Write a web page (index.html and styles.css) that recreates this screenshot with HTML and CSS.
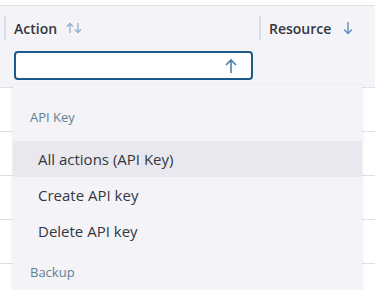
FILE: index.html
```html
<!DOCTYPE html>
<html lang="en">
<head>
    <meta charset="UTF-8">
    <meta name="viewport" content="width=device-width, initial-scale=1.0">
    <title>Audit log</title>
    <link rel="stylesheet" href="styles.css">
</head>
<body>
    <div class="table">
        <!-- header -->
        <div class="thead">
            <div class="th th-action">
                <div class="th-label">
                    Action
                    <svg class="sort-icon" width="16" height="12" viewBox="0 0 16 12">
                        <path d="M4 11V1.5M1 4.5L4 1.5L7 4.5" fill="none" stroke="#8fb0cc" stroke-width="1.3"/>
                        <path d="M12 1V10.5M9 7.5L12 10.5L15 7.5" fill="none" stroke="#8fb0cc" stroke-width="1.3"/>
                    </svg>
                </div>
                <div class="filter-input">
                    <svg width="12" height="16" viewBox="0 0 12 16">
                        <path d="M6 15V2M1 7L6 2L11 7" fill="none" stroke="#4f7fa8" stroke-width="1.6"/>
                    </svg>
                </div>
            </div>
            <div class="th th-resource">
                <div class="th-label">
                    Resource
                    <svg class="sort-icon" width="10" height="14" viewBox="0 0 10 14">
                        <path d="M5 1V12.5M1 8.5L5 12.5L9 8.5" fill="none" stroke="#5b8fc0" stroke-width="1.4"/>
                    </svg>
                </div>
            </div>
        </div>
        <!-- rows -->
        <div class="tr"></div>
        <div class="tr"></div>
        <div class="tr"></div>
        <div class="tr"></div>
    </div>

    <!-- dropdown -->
    <div class="dropdown">
        <div class="group-label">API Key</div>
        <div class="option active">All actions (API Key)</div>
        <div class="option">Create API key</div>
        <div class="option">Delete API key</div>
        <div class="group-label">Backup</div>
    </div>
</body>
</html>
```
FILE: styles.css
```css
/*global*/
* {
    margin: 0;
    padding: 0;
    box-sizing: border-box;
}

body {
    font-family: "Open Sans", "Noto Sans", sans-serif;
    color: #343741;
    background-color: #fff;
    padding-top: 5px;
    overflow: hidden;
    height: 290px;
    position: relative;
}

/*header*/
.thead {
    display: flex;
    height: 83px;
    background-color: #f3f3f8;
    border-top: 1px solid #dfdfe8;
    border-bottom: 1px solid #dfdfe8;
}

.th {
    padding-top: 10px;
}

.th-action {
    width: 259px;
    padding-left: 4px;
}

.th-resource {
    flex: 1;
}

.th-label {
    display: flex;
    align-items: center;
    height: 24px;
    border-left: 2px solid #dcdce6;
    padding-left: 8px;
    font-size: 14px;
    font-weight: 600;
}

.sort-icon {
    margin-left: 9px;
}

.th-resource .sort-icon {
    margin-left: 12px;
}

.filter-input {
    display: flex;
    align-items: center;
    justify-content: flex-end;
    margin: 11px 0 0 10px;
    width: 239px;
    height: 29px;
    padding-right: 14px;
    background-color: #fff;
    border: 2px solid #1a5a8a;
    border-radius: 4px;
}

/*rows*/
.tr {
    height: 44px;
    border-bottom: 1px solid #dfdfe8;
}

/*dropdown*/
.dropdown {
    position: absolute;
    left: 13px;
    top: 85px;
    width: 349px;
    height: 205px;
    padding-top: 9px;
    background-color: #f3f3f8;
    box-shadow: 0 1px 3px rgba(60, 60, 90, 0.15);
}

.group-label {
    padding: 14px 17px 15px;
    line-height: 18px;
    font-size: 13px;
    color: #627f96;
}

.option {
    height: 36px;
    line-height: 36px;
    padding-left: 25px;
    font-size: 15px;
    color: #343741;
}

.option.active {
    background-color: #e8e8ee;
}
```
